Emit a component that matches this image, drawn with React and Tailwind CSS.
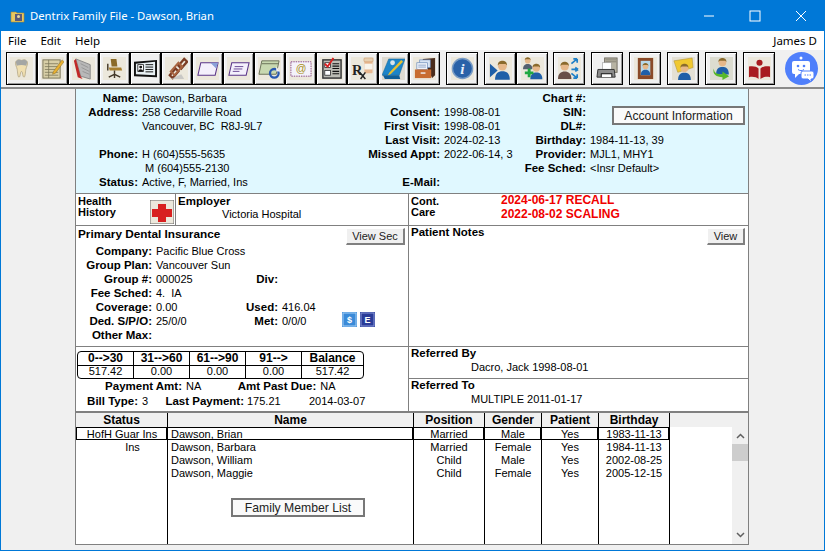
import React from "react";

const Person = ({ x = 12, y = 5, s = 1, body = "#1f5fa8", hair = "#8a6a2c" }) => (
  <g transform={`translate(${x} ${y}) scale(${s})`}>
    <path d="M-7 17c0-6 3-8 7-8s7 2 7 8z" fill={body} />
    <circle cx="0" cy="4" r="4.2" fill="#e6b88a" />
    <path d="M-4.4 3.5C-4.5 0-2-1 0-1s4.500 1 4.400 4.500L3 2H-3z" fill={hair} />
  </g>
);

const Bg = ({ c = "#ece8dc" }) => <rect width="24" height="24" fill={c} />;

const icons = [
  <g key="tooth"><Bg /><path d="M6 5c2-3 4-2 6-1.500 2-.5 4-1.500 6 1.500 1 3-1 5-1.500 8-.5 3-.5 8-2 8s-1-6-2.500-6-1 6-2.500 6-1.500-5-2-8C7 10 5 8 6 5z" fill="#f0dfb0" stroke="#a89a78" strokeWidth=".7" /><path d="M6 5c2-3 4-2 6-1.500 2-.5 4-1.500 6 1.500l-1 4c-3-1-7-1-10 0z" fill="#a4a6a4" /></g>,
  <g key="ledger"><Bg /><rect x="2" y="3" width="18" height="19" fill="#d8cfa8" stroke="#7a7458" /><path d="M4 7h14M4 10h14M4 13h14M4 16h14M4 19h14M8 3v19" stroke="#7a7458" strokeWidth=".8" /><path d="M22 3L13 15l-1 3 3-1L24 5z" fill="#e8b030" stroke="#8a6a20" strokeWidth=".5" /></g>,
  <g key="book"><Bg /><path d="M4 2l15 6v15L9 20z" fill="#b8b8b8" stroke="#888" /><path d="M4 2l5 18 2 3L6 21 2 4z" fill="#c02828" /><path d="M9 7l8 4M10 11l8 4M11 15l7 3" stroke="#888" strokeWidth=".7" /></g>,
  <g key="chair"><Bg /><path d="M8 2h6l1 8H9z" fill="#8a6a28" /><path d="M6 11h13l1 3H7z" fill="#a88030" /><path d="M5 7v7M12 14v5M6 21l6-3 6 3M12 18v4" stroke="#443828" strokeWidth="1.500" fill="none" /></g>,
  <g key="card"><rect width="24" height="24" fill="#f0f0f0" /><path d="M0 5l24-2v18L0 20z" fill="#111" /><path d="M2 7l20-2v14L2 18z" fill="#e8f0f4" /><rect x="4" y="8" width="6" height="7" fill="#fff" stroke="#111" strokeWidth=".8" /><circle cx="7" cy="10.500" r="1.500" fill="#111" /><path d="M4.500 15c0-3 5-3 5 0z" fill="#111" /><path d="M12 8h8M12 10.500h8M12 13h8M12 15.500h8" stroke="#111" /></g>,
  <g key="chain"><Bg /><path d="M20 2l3 3-6 7-3-3zM11 12l3 3-6 7-3-3z" fill="none" stroke="#7a3c24" strokeWidth="2.400" /><path d="M14 6l4 4-8 9-4-4z" fill="none" stroke="#a86440" strokeWidth="2" /><path d="M6 23h14l-3-5z" fill="#bbb" opacity=".7" /></g>,
  <g key="env1"><Bg /><path d="M5 6h18l-3 13H2z" fill="#f4f0fc" stroke="#5a3488" strokeWidth="1.100" /><path d="M15 6h8l-2 6z" fill="#8aa0d8" /></g>,
  <g key="env2"><Bg /><path d="M5 6h18l-3 13H2z" fill="#f4f0fc" stroke="#5a3488" strokeWidth="1.100" /><path d="M8 10h9M7 12.500h9M6 15h7" stroke="#5a3488" strokeWidth=".9" /></g>,
  <g key="cal"><Bg /><path d="M4 4h18l-3 14H1z" fill="#c8d8b0" stroke="#6a7058" /><path d="M4 7h17" stroke="#6a7058" /><circle cx="17" cy="17" r="4.500" fill="none" stroke="#2858b0" strokeWidth="2.400" /><path d="M19 10v5h4z" fill="#f0f0f0" /></g>,
  <g key="at"><Bg /><rect x="2" y="5" width="21" height="15" fill="#f4f2fa" stroke="#8a4888" strokeDasharray="1.500 1" /><text x="12.500" y="16" textAnchor="middle" fontSize="11" fontFamily="Liberation Sans" fill="#a89020">@</text></g>,
  <g key="check"><Bg /><rect x="3" y="3" width="19" height="19" fill="#bcbcb4" stroke="#333" strokeWidth="1.500" /><rect x="5" y="6" width="6" height="5" fill="#fff" stroke="#222" strokeWidth=".8" /><rect x="5" y="14" width="6" height="5" fill="#fff" stroke="#222" strokeWidth=".8" /><path d="M13 7h7M13 9.500h7M13 12h7M13 15h7M13 17.500h7" stroke="#111" strokeWidth="1.200" /><path d="M5 7l3 3 6-9" fill="none" stroke="#d82020" strokeWidth="2" /></g>,
  <g key="rx"><Bg /><rect x="14" y="4" width="8.500" height="13" rx="1" fill="#e8b890" /><rect x="14" y="7" width="8.500" height="6" fill="#f8f4ec" /><rect x="13.500" y="1" width="9.500" height="4" rx="1" fill="#e8d0b0" stroke="#c89060" strokeWidth=".5" /><text x="1" y="19" fontSize="15" fontWeight="700" fontFamily="Liberation Serif" fill="#222">R</text><path d="M9 16l6 7M15 16l-5 7" stroke="#222" strokeWidth="1.500" /></g>,
  <g key="note"><Bg c="#dedad0" /><path d="M7 2h17l-6 17H0z" fill="#1c84c8" stroke="#106090" strokeWidth=".5" /><path d="M1 19l2 4h16l-1-4z" fill="#0e5e98" /><path d="M20 3L8 16l-2 3 3-1L22 5z" fill="#e8c030" /><circle cx="11" cy="6" r="2.500" fill="#d8e4ec" /></g>,
  <g key="cab"><Bg /><path d="M10 2l13-1v18l-3 3z" fill="#4a2c1c" /><rect x="7" y="3" width="11" height="8" fill="#d8e4f4" stroke="#6888b8" strokeWidth=".7" /><rect x="4" y="6" width="11" height="7" fill="#eef2fa" stroke="#6888b8" strokeWidth=".7" /><path d="M5.500 8.500h8M5.500 10.500h8" stroke="#6888b8" strokeWidth=".7" /><rect x="2" y="13" width="17" height="9" fill="#c86c30" /><rect x="8" y="16" width="5" height="1.500" fill="#eee" /></g>,
];

const icons2 = {
  info: <g><Bg /><circle cx="12" cy="12" r="10.500" fill="#2a62a8" stroke="#7a9cc4" strokeWidth="1.500" /><text x="12" y="18" textAnchor="middle" fontFamily="Liberation Serif" fontStyle="italic" fontWeight="700" fontSize="16" fill="#e8f0fa">i</text></g>,
  arrowP: <g><Bg /><path d="M1 7l8 7-8 7z" fill="#1f5fa8" /><Person x={14} y={5} s={1.100} /></g>,
  addP: <g><Bg /><Person x={7} y={1} s={.7} body="#556070" /><Person x={16} y={8} s={.9} /><path d="M4 15h3v-3h3v3h3v3h-3v3H7v-3H4z" fill="#20a840" /></g>,
  shareP: <g><Bg /><Person x={7} y={6} s={1} body="#6a5048" /><path d="M14 7l6-5M20 2h-4M20 2v4M14 13h7M21 13l-3-2M21 13l-3 2M14 17l6 5M20 22h-4M20 22v-4" stroke="#2080c8" strokeWidth="1.800" fill="none" /></g>,
  print: <g><Bg c="#f0f0f0" /><rect x="9" y="1" width="13" height="15" fill="#b8b4a4" stroke="#706c60" /><path d="M10 3h11M10 5h11" stroke="#706c60" strokeWidth=".7" /><rect x="7" y="6" width="9" height="8" fill="#fff" stroke="#999" strokeWidth=".6" /><path d="M2 13h17l1 8H1z" fill="#8c8c8c" stroke="#333" /><rect x="5" y="17" width="12" height="4" fill="#111" /><rect x="6" y="18" width="10" height="3" fill="#fff" /></g>,
  frame: <g><Bg /><rect x="4" y="1" width="16" height="22" fill="#8a4a28" /><rect x="7" y="4" width="10" height="15" fill="#b8d8e8" /><Person x={12} y={7} s={.7} /></g>,
  noteP: <g><Bg c="#e4e0d4" /><path d="M2 4l19-3 1 10-16 5z" fill="#f0c830" stroke="#a8882a" strokeWidth=".5" /><Person x={13} y={8} s={.95} /></g>,
  greenP: <g><Bg c="#dcdcd0" /><Person x={13} y={2} s={.95} /><path d="M4 12c0 5 4 6 9 6v-3l7 5-7 4v-3c-6 0-11-3-9-9z" fill="#58b828" /></g>,
  reader: <g><Bg /><circle cx="12" cy="6" r="3.200" fill="#a81c20" /><path d="M1 10c4-1 8 0 10 2v11c-2-2-6-3-10-2zM23 10c-4-1-8 0-10 2v11c2-2 6-3 10-2z" fill="#a81c20" /></g>,
};

const ToolBtn = ({ children, wide }) => (
  <div className={`${wide ? "w-[32px]" : "w-[31px]"} h-[33px] border-[1.500px] border-black bg-[#f0f0f0] flex items-center justify-center shadow-[inset_1px_1px_0_#fff,inset_-1px_-1px_0_#9a9a9a]`}>
    <svg width="23" height="23" viewBox="0 0 24 24">{children}</svg>
  </div>
);

const Bold = ({ children, className = "" }) => <span className={`font-bold text-[11.5px] ${className}`}>{children}</span>;

const Field = ({ label, value }) => (
  <>
    <div className="h-[14px] text-right font-bold text-[11.5px] whitespace-nowrap">{label}</div>
    <div className="h-[14px] pl-[4px] whitespace-pre">{value}</div>
  </>
);

const WinBtn = ({ children }) => (
  <div className="w-[46px] h-[30px] flex items-center justify-center">
    <svg width="12" height="12" viewBox="0 0 12 12" fill="none" stroke="#fff" strokeWidth="1">{children}</svg>
  </div>
);

const Raised = ({ children, className = "" }) => (
  <div className={`flex items-center justify-center bg-[#fafafa] text-[12.2px] text-[#222] border-[2px] border-[#777] ${className}`}>{children}</div>
);

const SmallBtn = ({ children, className = "" }) => (
  <div className={`flex items-center justify-center bg-[#f0f0f0] text-[#222] border-b-[2px] border-r-[2px] border-b-[#808080] border-r-[#808080] border-t border-l border-t-white border-l-white ${className}`}>{children}</div>
);

const aging = [
  ["0-->30", "517.42", "w-[56px]"],
  ["31-->60", "0.00", "w-[56px]"],
  ["61-->90", "0.00", "w-[56px]"],
  ["91-->", "0.00", "w-[56px]"],
  ["Balance", "517.42", "flex-1"],
];

const columns = [
  { h: "Status", w: "w-[92px]", cls: "text-center", sel: "HofH Guar Ins", rows: [<span key="i" className="pl-[22px]">Ins</span>], first: true },
  { h: "Name", w: "w-[246px]", cls: "pl-[3px]", sel: "Dawson, Brian", rows: ["Dawson, Barbara", "Dawson, William", "Dawson, Maggie"] },
  { h: "Position", w: "w-[71px]", cls: "text-center", sel: "Married", rows: ["Married", "Child", "Child"] },
  { h: "Gender", w: "w-[57px]", cls: "text-center", sel: "Male", rows: ["Female", "Male", "Female"] },
  { h: "Patient", w: "w-[57px]", cls: "text-center", sel: "Yes", rows: ["Yes", "Yes", "Yes"] },
  { h: "Birthday", w: "w-[71px]", cls: "text-center", sel: "1983-11-13", rows: ["1984-11-13", "2002-08-25", "2005-12-15"] },
];

export default function App() {
  return (
    <div className="w-[825px] h-[551px] flex flex-col border-x border-b border-[#0078d7] bg-[#f0f0f0] text-black overflow-hidden font-['Liberation_Sans',sans-serif] text-[11px] leading-[14px]">
      <div className="h-[31px] shrink-0 bg-[#0078d7] flex items-center text-white font-['Noto_Sans',sans-serif] text-[11.3px]">
        <svg className="ml-[9px]" width="16" height="16" viewBox="0 0 16 16">
          <path d="M1 4h5l1 1h7v9H1z" fill="#e8c860" stroke="#a88830" strokeWidth=".6" />
          <rect x="5" y="6" width="7" height="7" fill="#5a5a78" />
          <circle cx="8.500" cy="8.500" r="1.500" fill="#e8d8a0" />
        </svg>
        <span className="ml-[4px] mt-[1px]">Dentrix Family File - Dawson, Brian</span>
        <div className="ml-auto flex">
          <WinBtn><path d="M1 6h10" /></WinBtn>
          <WinBtn><rect x="1" y="1" width="10" height="10" /></WinBtn>
          <WinBtn><path d="M1 1l10 10M11 1L1 11" /></WinBtn>
        </div>
      </div>

      <div className="h-[19px] shrink-0 bg-white flex items-center font-['Noto_Sans',sans-serif] text-[11.5px]">
        <span className="ml-[7px]">File</span>
        <span className="ml-[14px]">Edit</span>
        <span className="ml-[14px]">Help</span>
        <span className="ml-auto mr-[7px]">James D</span>
      </div>

      <div className="h-[39px] shrink-0 flex items-center pl-[5px] border-b-[2px] border-[#8a8a8a]">
        <div className="flex">{icons.map((ic, i) => <ToolBtn key={i}>{ic}</ToolBtn>)}</div>
        <div className="ml-[6px]"><ToolBtn wide>{icons2.info}</ToolBtn></div>
        <div className="ml-[6px] flex"><ToolBtn wide>{icons2.arrowP}</ToolBtn><ToolBtn wide>{icons2.addP}</ToolBtn></div>
        <div className="ml-[5px] flex gap-[6px]">
          <ToolBtn wide>{icons2.shareP}</ToolBtn>
          <ToolBtn wide>{icons2.print}</ToolBtn>
          <ToolBtn wide>{icons2.frame}</ToolBtn>
          <ToolBtn wide>{icons2.noteP}</ToolBtn>
          <ToolBtn wide>{icons2.greenP}</ToolBtn>
          <ToolBtn wide>{icons2.reader}</ToolBtn>
        </div>
        <svg className="ml-[10px]" width="33" height="33" viewBox="0 0 33 33">
          <circle cx="16.500" cy="16.500" r="16.500" fill="#4f7ffb" />
          <path d="M9 9h14a2 2 0 0 1 2 2v9a2 2 0 0 1-2 2h-9l-4 4v-4H9a2 2 0 0 1-2-2v-9a2 2 0 0 1 2-2z" fill="#fff" />
          <circle cx="16" cy="6" r="1.500" fill="#fff" />
          <circle cx="13" cy="14" r="1.300" fill="#4f7ffb" />
          <circle cx="19" cy="14" r="1.300" fill="#4f7ffb" />
          <path d="M13 17.500c2 1.500 4 1.500 6 0" stroke="#4f7ffb" fill="none" />
          <path d="M18 19h9a2 2 0 0 1 2 2v4a2 2 0 0 1-2 2h-1v3l-3-3h-5a2 2 0 0 1-2-2v-4a2 2 0 0 1 2-2z" fill="#fff" stroke="#4f7ffb" />
          <path d="M19.500 23h1.500M22 23h1.500M24.500 23h1.500" stroke="#4f7ffb" />
        </svg>
      </div>

      <div className="flex-1 ml-[74px] mr-[75px] mb-[5px] flex flex-col border-x border-b border-[#808080] bg-white">
        <div className="h-[105px] shrink-0 bg-[#e0f8ff] flex pt-[2px] border-b border-[#808080]">
          <div className="grid grid-cols-[62px_222px] grid-rows-[repeat(7,14px)]">
            <Field label="Name:" value="Dawson, Barbara" />
            <Field label="Address:" value="258 Cedarville Road" />
            <Field label="" value="Vancouver, BC  R8J-9L7" />
            <Field label="" value="" />
            <Field label="Phone:" value="H (604)555-5635" />
            <Field label="" value={<span className="pl-[3px]">M (604)555-2130</span>} />
            <Field label="Status:" value="Active, F, Married, Ins" />
          </div>
          <div className="grid grid-cols-[80px_66px] grid-rows-[repeat(7,14px)]">
            <Field label="" value="" />
            <Field label="Consent:" value="1998-08-01" />
            <Field label="First Visit:" value="1998-08-01" />
            <Field label="Last Visit:" value="2024-02-13" />
            <Field label="Missed Appt:" value="2022-06-14, 3" />
            <Field label="" value="" />
            <Field label="E-Mail:" value="" />
          </div>
          <div className="grid grid-cols-[80px_1fr] grid-rows-[repeat(7,14px)] flex-1">
            <Field label="Chart #:" value="" />
            <div className="h-[14px] text-right font-bold text-[11.5px]">SIN:</div>
            <div className="h-[14px] flex items-start">
              <Raised className="ml-[26px] mt-[1px] w-[133px] h-[19px] relative">Account Information</Raised>
            </div>
            <Field label="DL#:" value="" />
            <Field label="Birthday:" value="1984-11-13, 39" />
            <Field label="Provider:" value="MJL1, MHY1" />
            <Field label="Fee Sched:" value="<Insr Default>" />
          </div>
        </div>

        <div className="flex h-[219px] shrink-0 border-b-[2px] border-[#808080]">
          <div className="w-[333px] shrink-0 flex flex-col border-r border-[#808080]">
            <div className="h-[32px] shrink-0 flex border-b border-[#808080]">
              <div className="w-[100px] shrink-0 flex border-r border-[#808080] pl-[2px] pt-[2px]">
                <div className="font-bold leading-[11px] w-[72px]">Health<br />History</div>
                <svg className="mt-[4px]" width="24" height="24" viewBox="0 0 24 24">
                  <rect width="24" height="24" fill="#ece8dc" stroke="#666" />
                  <path d="M8 4h8v5h6v8h-6v5H8v-5H2V9h6z" fill="#d82020" />
                </svg>
              </div>
              <div className="flex-1 pl-[2px]">
                <div className="font-bold text-[11.5px]">Employer</div>
                <div className="pl-[44px] leading-[13px]">Victoria Hospital</div>
              </div>
            </div>

            <div className="h-[121px] shrink-0 flex flex-col border-b border-[#808080]">
              <div className="flex justify-between items-start h-[18px] shrink-0 pl-[2px] pr-[3px]">
                <Bold className="pt-[1px] text-[11.8px]">Primary Dental Insurance</Bold>
                <SmallBtn className="w-[59px] h-[17px] mt-[2px]">View Sec</SmallBtn>
              </div>
              <div className="grid grid-cols-[76px_68px_58px_64px_1fr] grid-rows-[repeat(7,14px)]">
                <Field label="Company:" value="Pacific Blue Cross" /><div /><div /><div />
                <Field label="Group Plan:" value="Vancouver Sun" /><div /><div /><div />
                <Field label="Group #:" value="000025" /><Field label="Div:" value="" /><div />
                <Field label="Fee Sched:" value="4.  IA" /><div /><div /><div />
                <Field label="Coverage:" value="0.00" /><Field label="Used:" value="416.04" /><div />
                <Field label="Ded. S/P/O:" value="25/0/0" /><Field label="Met:" value="0/0/0" />
                <div className="flex gap-[3px] -mt-[2px]">
                  <svg width="15" height="15" viewBox="0 0 15 15"><rect width="15" height="15" fill="#3a8ad8" /><rect x="1" y="1" width="13" height="13" fill="none" stroke="#a8d0f4" /><text x="7.500" y="11" textAnchor="middle" fontSize="9" fontWeight="700" fill="#fff" fontFamily="Liberation Sans">$</text></svg>
                  <svg width="15" height="15" viewBox="0 0 15 15"><rect width="15" height="15" fill="#2a3c98" /><rect x="1" y="1" width="13" height="13" fill="none" stroke="#8a98d8" /><text x="7.500" y="11" textAnchor="middle" fontSize="9" fontWeight="700" fill="#fff" fontFamily="Liberation Sans">E</text></svg>
                </div>
                <Field label="Other Max:" value="" /><div /><div /><div />
              </div>
            </div>

            <div className="flex-1 pt-[4px] pl-[1px]">
              <div className="w-[287px] h-[28px] flex border border-black rounded-[4px]">
                {aging.map(([h, v, w], i) => (
                  <div key={h} className={`${w} flex flex-col text-center ${i < 4 ? "border-r border-black" : ""}`}>
                    <div className="h-[14px] font-bold text-[12px] leading-[12px] border-b border-black">{h}</div>
                    <div className="flex-1 leading-[11px]">{v}</div>
                  </div>
                ))}
              </div>
              <div className="flex h-[14px] whitespace-nowrap">
                <Bold className="w-[105px] text-right">Payment Amt:</Bold><span className="pl-[4px]">NA</span>
                <Bold className="w-[115px] text-right">Amt Past Due:</Bold><span className="pl-[4px]">NA</span>
              </div>
              <div className="flex h-[14px] mt-[1px] whitespace-nowrap">
                <Bold className="w-[61px] text-right">Bill Type:</Bold><span className="w-[20px] pl-[4px]">3</span>
                <Bold className="w-[86px] text-right">Last Payment:</Bold><span className="w-[65px] pl-[3px]">175.21</span>
                <span>2014-03-07</span>
              </div>
            </div>
          </div>

          <div className="flex-1 flex flex-col">
            <div className="h-[32px] shrink-0 flex border-b border-[#808080] pl-[2px]">
              <div className="font-bold leading-[11px] pt-[2px] w-[90px]">Cont.<br />Care</div>
              <div className="font-bold text-[12px] text-[#f00000] -mt-[1px] leading-[14px]">2024-06-17 RECALL<br />2022-08-02 SCALING</div>
            </div>
            <div className="h-[121px] shrink-0 flex justify-between items-start border-b border-[#808080] pl-[2px] pr-[3px]">
              <Bold className="leading-[12px]">Patient Notes</Bold>
              <SmallBtn className="w-[38px] h-[17px] mt-[2px]">View</SmallBtn>
            </div>
            <div className="h-[32px] shrink-0 border-b border-[#808080] pl-[2px]">
              <div className="font-bold text-[11.5px] leading-[13px]">Referred By</div>
              <div className="pl-[60px] leading-[15px]">Dacro, Jack 1998-08-01</div>
            </div>
            <div className="flex-1 pl-[2px]">
              <div className="font-bold text-[11.5px] leading-[13px]">Referred To</div>
              <div className="pl-[60px] leading-[15px]">MULTIPLE 2011-01-17</div>
            </div>
          </div>
        </div>

        <div className="flex-1 flex relative">
          {columns.map((c) => (
            <div key={c.h} className={`${c.w} shrink-0 flex flex-col border-r border-black`}>
              <div className="h-[14px] shrink-0 font-bold text-[12px] text-center bg-[#f0f0f0]">{c.h}</div>
              <div className={`h-[13px] shrink-0 border-y border-black leading-[12px] whitespace-nowrap shadow-[inset_-1px_0_0_#000] ${c.first ? "border-l" : ""} ${c.cls}`}>{c.sel}</div>
              {c.rows.map((r, i) => <div key={i} className={`h-[13px] shrink-0 leading-[15px] whitespace-nowrap ${c.cls}`}>{r}</div>)}
            </div>
          ))}
          <div className="flex-1 flex flex-col">
            <div className="h-[14px] shrink-0 bg-[#f0f0f0]" />
            <div className="flex-1 flex">
              <div className="flex-1" />
              <div className="w-[16px] bg-[#f0f0f0] flex flex-col items-center">
                <svg className="mt-[6px]" width="9" height="6" viewBox="0 0 9 6" fill="none" stroke="#606060" strokeWidth="1.500"><path d="M1 5l3.500-3.500L8 5" /></svg>
                <div className="w-[16px] h-[17px] mt-[5px] bg-[#cdcdcd]" />
                <div className="flex-1" />
                <svg className="mb-[6px]" width="9" height="6" viewBox="0 0 9 6" fill="none" stroke="#606060" strokeWidth="1.500"><path d="M1 1l3.500 3.500L8 1" /></svg>
              </div>
            </div>
          </div>
          <Raised className="absolute left-[155px] top-[85px] w-[134px] h-[19px]">Family Member List</Raised>
        </div>
      </div>
    </div>
  );
}
